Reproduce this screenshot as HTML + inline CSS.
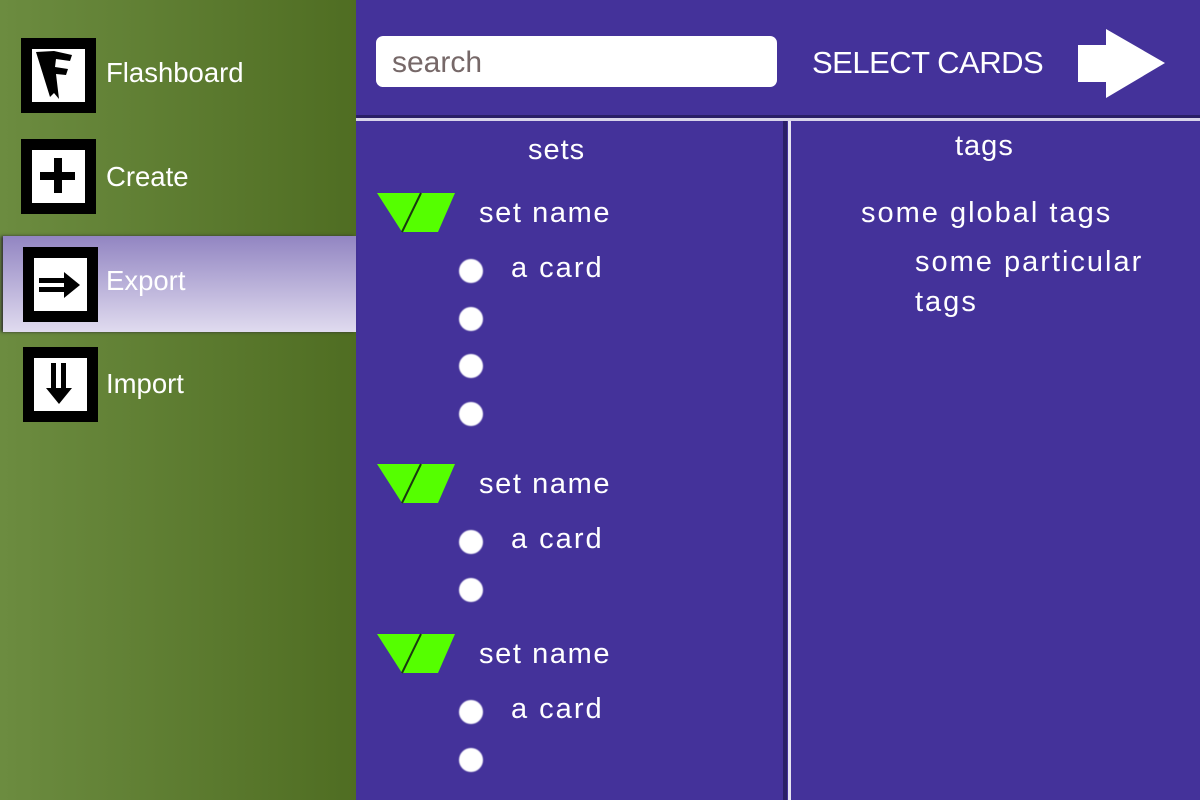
<!DOCTYPE html>
<html><head><meta charset="utf-8"><style>
*{margin:0;padding:0;box-sizing:border-box}
body{width:1200px;height:800px;overflow:hidden;background:#44329a;position:relative;font-family:"Liberation Sans",sans-serif;color:#fff}
.a{position:absolute;white-space:nowrap}
#side{position:absolute;left:0;top:0;width:356px;height:800px;background:linear-gradient(90deg,#6c8c40,#4f6d22)}
.ib{position:absolute;width:75px;height:75px;background:#000}
.ib .in{position:absolute;left:11px;top:11px;width:53px;height:53px;background:#fff}
.lbl{position:absolute;left:106px;font-size:27.5px;color:#fff}
#exp{position:absolute;left:3px;top:236px;width:353px;height:96px;background:linear-gradient(180deg,#9285c2,#e0dbef);box-shadow:-2px 0 3px #333}
.t{font-size:29px;letter-spacing:2px}
.dot{position:absolute;width:24px;height:24px;border-radius:50%;background:#fff;filter:blur(0.6px)}
</style></head><body>
<div id="side">
 <div class="ib" style="left:21px;top:38px"><div class="in"><svg width="53" height="53" viewBox="0 0 53 53"><path d="M4 3 L22 2 L40 6 L38 12 L24 10 L23 18 L36 20 L34 26 L24 25 L27 50 L22 44 L18 48 Z" fill="#000"/></svg></div></div>
 <div class="lbl" style="top:57px">Flashboard</div>
 <div class="ib" style="left:21px;top:139px"><div class="in"><svg width="53" height="53"><rect x="8" y="22" width="35" height="8" fill="#000"/><rect x="22" y="8" width="8" height="35" fill="#000"/></svg></div></div>
 <div class="lbl" style="top:161px">Create</div>
 <div id="exp"></div>
 <div class="ib" style="left:23px;top:247px"><div class="in"><svg width="53" height="53"><rect x="5" y="20" width="30" height="5" fill="#000"/><rect x="5" y="29" width="30" height="5" fill="#000"/><path d="M30 14 L46 27 L30 40 Z" fill="#000"/></svg></div></div>
 <div class="lbl" style="top:265px">Export</div>
 <div class="ib" style="left:23px;top:347px"><div class="in"><svg width="53" height="53"><rect x="17" y="5" width="5" height="30" fill="#000"/><rect x="27" y="5" width="5" height="30" fill="#000"/><path d="M12 30 L38 30 L25 46 Z" fill="#000"/></svg></div></div>
 <div class="lbl" style="top:368px">Import</div>
</div>
<div class="a" style="left:376px;top:36px;width:401px;height:51px;background:#fff;border-radius:7px"></div>
<div class="a" style="left:392px;top:46px;font-size:30px;color:#766868">search</div>
<div class="a" style="left:812px;top:45px;font-size:31px;letter-spacing:-0.5px">SELECT CARDS</div>
<svg class="a" style="left:1076px;top:28px" width="92" height="72"><path d="M2 17 L30 17 L30 1 L89 35 L30 70 L30 54 L2 54 Z" fill="#fff"/></svg>
<div class="a" style="left:356px;top:115px;width:844px;height:3px;background:#2a1f66"></div>
<div class="a" style="left:356px;top:118px;width:844px;height:3px;background:#d8d4ea"></div>
<div class="a" style="left:783px;top:121px;width:4px;height:679px;background:#2a1f66"></div>
<div class="a" style="left:788px;top:121px;width:3px;height:679px;background:#e6e3f2"></div>
<div class="a t" style="left:528px;top:134px;letter-spacing:1px">sets</div>
<div class="a t" style="left:955px;top:130px;letter-spacing:1px">tags</div>
<div class="a t" style="left:861px;top:197px">some global tags</div>
<div class="a t" style="left:915px;top:246px">some particular</div>
<div class="a t" style="left:915px;top:286px">tags</div>

<svg class="a" style="left:376px;top:192px" width="82" height="42"><path d="M1 1 L45 1 L26 40 Z" fill="#55ff00"/><path d="M45 1 L79 1 L62 40 L26 40 Z" fill="#55ff00"/><path d="M45 1 L26 40" stroke="#1a3a10" stroke-width="2"/></svg>
<div class="a t" style="left:479px;top:197px;letter-spacing:1.6px">set name</div>
<div class="dot" style="left:459px;top:259px"></div><div class="a t" style="left:511px;top:252px">a card</div>
<div class="dot" style="left:459px;top:307px"></div>
<div class="dot" style="left:459px;top:354px"></div>
<div class="dot" style="left:459px;top:402px"></div>

<svg class="a" style="left:376px;top:463px" width="82" height="42"><path d="M1 1 L45 1 L26 40 Z" fill="#55ff00"/><path d="M45 1 L79 1 L62 40 L26 40 Z" fill="#55ff00"/><path d="M45 1 L26 40" stroke="#1a3a10" stroke-width="2"/></svg>
<div class="a t" style="left:479px;top:468px;letter-spacing:1.6px">set name</div>
<div class="dot" style="left:459px;top:530px"></div><div class="a t" style="left:511px;top:523px">a card</div>
<div class="dot" style="left:459px;top:578px"></div>

<svg class="a" style="left:376px;top:633px" width="82" height="42"><path d="M1 1 L45 1 L26 40 Z" fill="#55ff00"/><path d="M45 1 L79 1 L62 40 L26 40 Z" fill="#55ff00"/><path d="M45 1 L26 40" stroke="#1a3a10" stroke-width="2"/></svg>
<div class="a t" style="left:479px;top:638px;letter-spacing:1.6px">set name</div>
<div class="dot" style="left:459px;top:700px"></div><div class="a t" style="left:511px;top:693px">a card</div>
<div class="dot" style="left:459px;top:748px"></div>
</body></html>
